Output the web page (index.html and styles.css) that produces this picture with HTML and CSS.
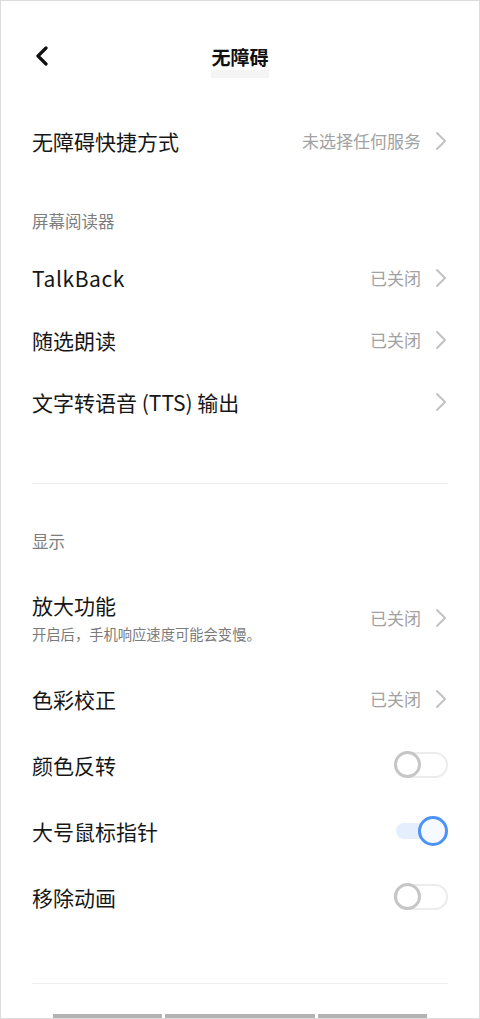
FILE: index.html
```html
<!DOCTYPE html>
<html lang="zh-CN">
<head>
<meta charset="utf-8">
<title>无障碍</title>
<link rel="stylesheet" href="styles.css">
</head>
<body>
<div class="screen">
  <header class="topbar">
    <div class="back">
      <svg width="14" height="20" viewBox="0 0 14 20"><path d="M11 2 L3 10 L11 18" fill="none" stroke="#111" stroke-width="3.2" stroke-linecap="round" stroke-linejoin="round"/></svg>
    </div>
    <div class="title">无障碍</div>
    <div></div>
  </header>

  <div class="row row-first">
    <span class="label">无障碍快捷方式</span>
    <span class="right"><span class="value">未选择任何服务</span><svg class="chev" width="12" height="20" viewBox="0 0 12 20"><path d="M2 2 L10 10 L2 18" fill="none" stroke="#c2c2c2" stroke-width="2" stroke-linecap="round" stroke-linejoin="round"/></svg></span>
  </div>

  <div class="section section-a">屏幕阅读器</div>

  <div class="row">
    <span class="label latin">TalkBack</span>
    <span class="right"><span class="value">已关闭</span><svg class="chev" width="12" height="20" viewBox="0 0 12 20"><path d="M2 2 L10 10 L2 18" fill="none" stroke="#c2c2c2" stroke-width="2" stroke-linecap="round" stroke-linejoin="round"/></svg></span>
  </div>
  <div class="row">
    <span class="label">随选朗读</span>
    <span class="right"><span class="value">已关闭</span><svg class="chev" width="12" height="20" viewBox="0 0 12 20"><path d="M2 2 L10 10 L2 18" fill="none" stroke="#c2c2c2" stroke-width="2" stroke-linecap="round" stroke-linejoin="round"/></svg></span>
  </div>
  <div class="row">
    <span class="label">文字转语音 (TTS) 输出</span>
    <span class="right"><svg class="chev" width="12" height="20" viewBox="0 0 12 20"><path d="M2 2 L10 10 L2 18" fill="none" stroke="#c2c2c2" stroke-width="2" stroke-linecap="round" stroke-linejoin="round"/></svg></span>
  </div>

  <div class="divider divider-a"></div>

  <div class="section section-b">显示</div>

  <div class="row row-sub">
    <div class="labels">
      <div class="label">放大功能</div>
      <div class="sub">开启后，手机响应速度可能会变慢。</div>
    </div>
    <span class="right"><span class="value">已关闭</span><svg class="chev" width="12" height="20" viewBox="0 0 12 20"><path d="M2 2 L10 10 L2 18" fill="none" stroke="#c2c2c2" stroke-width="2" stroke-linecap="round" stroke-linejoin="round"/></svg></span>
  </div>
  <div class="row row-tall">
    <span class="label">色彩校正</span>
    <span class="right"><span class="value">已关闭</span><svg class="chev" width="12" height="20" viewBox="0 0 12 20"><path d="M2 2 L10 10 L2 18" fill="none" stroke="#c2c2c2" stroke-width="2" stroke-linecap="round" stroke-linejoin="round"/></svg></span>
  </div>
  <div class="row row-tall">
    <span class="label">颜色反转</span>
    <span class="switch off"><span class="track"></span><span class="knob"></span></span>
  </div>
  <div class="row row-tall">
    <span class="label">大号鼠标指针</span>
    <span class="switch on"><span class="track"></span><span class="knob"></span></span>
  </div>
  <div class="row row-tall">
    <span class="label">移除动画</span>
    <span class="switch off"><span class="track"></span><span class="knob"></span></span>
  </div>

  <div class="divider divider-b"></div>

  <div class="peek">
    <span class="bar b1"></span><span class="bar b2"></span><span class="bar b3"></span>
  </div>
</div>
</body>
</html>
```

FILE: styles.css
```css
* { box-sizing: border-box; }
html, body { margin: 0; padding: 0; background: #fff; }
body {
  font-family: "Noto Sans CJK SC", "Noto Sans", sans-serif;
  color: #161616;
}
.screen {
  width: 480px;
  height: 1019px;
  overflow: hidden;
  border: 1px solid #dcdcdc;
  padding: 0 31px;
  background: #fff;
}
.topbar {
  height: 109px;
  display: grid;
  grid-template-columns: 1fr auto 1fr;
  align-items: center;
  margin: 0 -31px;
  padding: 0 31px;
}
.back { display: flex; align-items: center; padding-left: 3px; }
.back svg { display: block; }
.title {
  font-size: 19px;
  font-weight: 700;
  line-height: 28px;
  padding-top: 3px;
  color: #111;
  background: linear-gradient(#fff 0, #fff 30px, #f4f4f4 30px, #f4f4f4 34px);
  height: 38px;
  margin-top: 6px;
}
.row {
  display: flex;
  align-items: center;
  justify-content: space-between;
  height: 62px;
}
.row-first { height: 66px; }
.row-tall { height: 66px; }
.label {
  font-size: 21px;
  line-height: 28px;
  color: #161616;
}
.row > .label { margin-bottom: 4px; }
.latin { letter-spacing: 0.6px; }
.right {
  display: flex;
  align-items: center;
  margin-bottom: 4px;
}
.row-sub .right { margin-bottom: 0; }
.value {
  font-size: 17px;
  color: #a2a2a2;
  line-height: 24px;
}
.chev { display: block; margin-left: 14px; margin-right: 1px; }
.section {
  font-size: 16.5px;
  line-height: 20px;
  color: #7d7d7d;
}
.section-a { padding: 35px 0 18px; }
.section-b { padding: 47px 0 35px; }
.divider { height: 1px; background: #efefef; }
.divider-a { margin-top: 48px; }
.divider-b { margin-top: 51px; }
.row-sub {
  height: auto;
  padding: 5px 0 24px;
}
.labels { display: flex; flex-direction: column; }
.sub {
  font-size: 14.3px;
  line-height: 20px;
  color: #7a7a7a;
  margin-top: 5px;
}
.switch {
  position: relative;
  width: 54px;
  height: 28px;
  display: block;
  margin-bottom: 4px;
}
.switch.off .track {
  position: absolute;
  left: 0; top: 1px;
  width: 54px; height: 26px;
  border: 2px solid #ececec;
  border-radius: 13px;
  background: #fff;
}
.switch.off .knob {
  position: absolute;
  left: 0; top: 0;
  width: 27px; height: 27px;
  border: 3px solid #c6c6c6;
  border-radius: 50%;
  background: #fff;
}
.switch.on .track {
  position: absolute;
  left: 2px; top: 6px;
  width: 40px; height: 16px;
  border-radius: 8px;
  background: #e4eefc;
}
.switch.on .knob {
  position: absolute;
  right: 0; top: -1px;
  width: 30px; height: 30px;
  border: 3px solid #4b93f5;
  border-radius: 50%;
  background: #f6f9ff;
}
.peek {
  display: flex;
  gap: 3px;
  margin-top: 30px;
  padding-left: 21px;
}
.bar { height: 4px; background: #b3b3b3; display: block; }
.b1 { width: 109px; }
.b2 { width: 150px; }
.b3 { width: 109px; }
```
